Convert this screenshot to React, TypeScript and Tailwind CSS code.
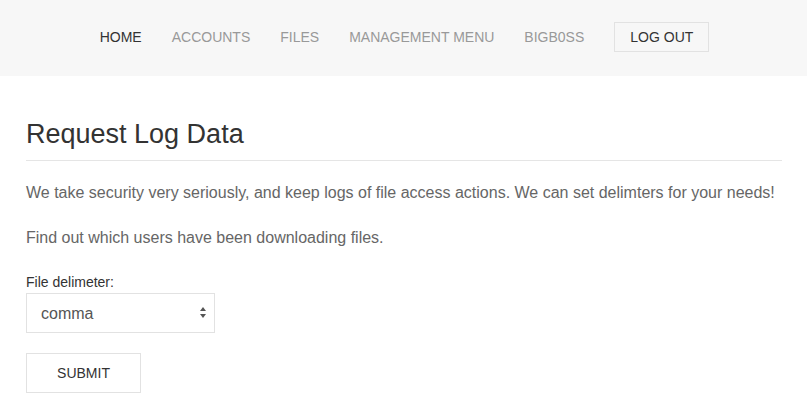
import { useState } from "react";

const navItems = ["ACCOUNTS", "FILES", "MANAGEMENT MENU", "BIGB0SS"];

export default function App() {
  const [delim, setDelim] = useState("comma");

  return (
    <div className="min-h-screen bg-white font-['Liberation_Sans',Arial,sans-serif] text-[#333]">
      {/* top nav */}
      <header className="flex h-[76px] items-center justify-center bg-[#f7f7f7] pb-[2px] pl-[2px]">
        <nav className="flex items-center gap-[30px] text-[14px] leading-5">
          <a className="text-[#333]">HOME</a>
          {navItems.map((item) => (
            <a key={item} className="text-[#999]">
              {item}
            </a>
          ))}
          <button className="h-[30px] border border-[#e2e2e2] px-[15px] text-[14px] text-[#333]">
            LOG OUT
          </button>
        </nav>
      </header>

      <main className="pl-[26px] pr-[25px] pt-[43px]">
        <h1 className="border-b border-[#e5e5e5] pb-[11px] text-[27px] leading-[30px] text-[#333]">
          Request Log Data
        </h1>

        <p className="mt-[20px] text-[16px] leading-6 text-[#666]">
          We take security very seriously, and keep logs of file access actions. We can set delimters for your needs!
        </p>
        <p className="mt-[21px] text-[16px] leading-6 text-[#666]">
          Find out which users have been downloading files.
        </p>

        <form className="mt-[22px]" onSubmit={(e) => e.preventDefault()}>
          <label className="block text-[14px] leading-5 text-[#333]">File delimeter:</label>
          <div className="relative mt-[1px] w-[189px]">
            <select
              value={delim}
              onChange={(e) => setDelim(e.target.value)}
              className="h-[40px] w-full appearance-none border border-[#e2e2e2] bg-white pl-[14px] pr-6 pt-[2px] text-[16px] text-[#555] outline-none"
            >
              <option value="comma">comma</option>
              <option value="tab">tab</option>
              <option value="pipe">pipe</option>
            </select>
            <svg
              className="pointer-events-none absolute right-[9px] top-[14px]"
              width="6"
              height="11"
              viewBox="0 0 6 11"
            >
              <path d="M3 0L6 4H0z" fill="#555" />
              <path d="M3 11L0 7h6z" fill="#555" />
            </svg>
          </div>

          <button
            type="submit"
            className="mt-[20px] h-[40px] w-[115px] border border-[#e2e2e2] bg-white text-[14px] text-[#333]"
          >
            SUBMIT
          </button>
        </form>
      </main>
    </div>
  );
}
